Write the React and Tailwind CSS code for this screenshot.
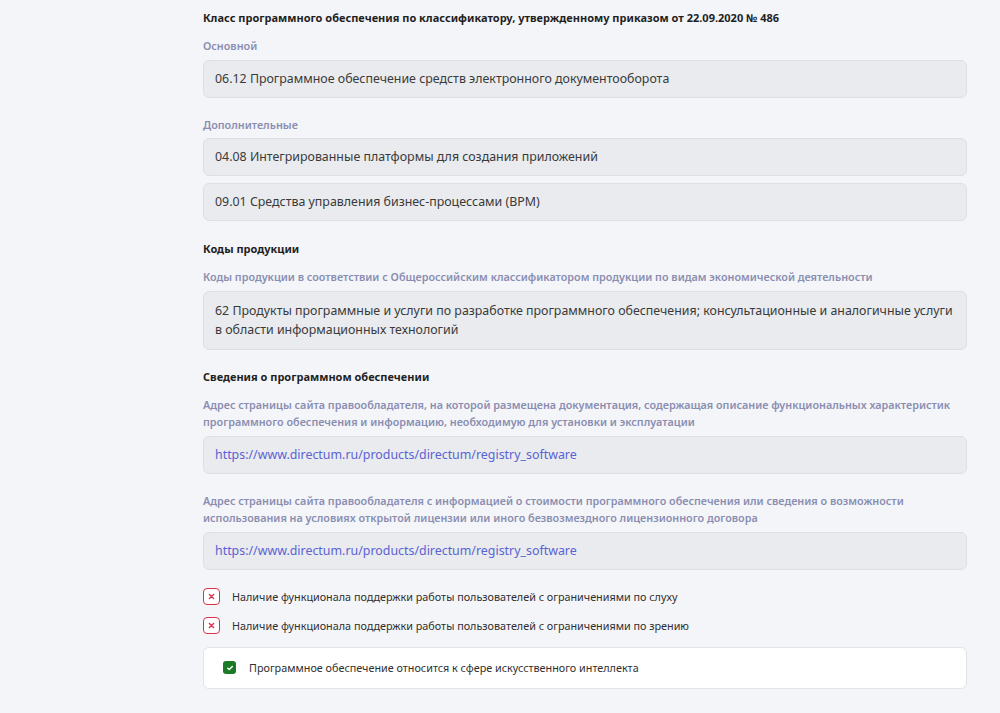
import React from "react";

function Field({ children, link, multi }) {
  return (
    <div
      className={
        "rounded-md border border-[#dcdfe4] bg-[#e9ebef] px-[11px] py-[9px] text-[12.4px] " +
        (multi ? "leading-[19.5px] " : "leading-[18px] ") +
        (link ? "text-[#5b63d3]" : "text-[#3a3a3a]")
      }
    >
      {children}
    </div>
  );
}

function Label({ children }) {
  return <div className="text-[10.8px] leading-[17.5px] font-semibold text-[#8a8eb1]">{children}</div>;
}

function Heading({ children }) {
  return <div className="text-[11px] leading-[17px] font-bold text-[#1f1f1f]">{children}</div>;
}

function XBox() {
  return (
    <span className="flex h-[17px] w-[17px] items-center justify-center rounded-[4px] border-[1.5px] border-[#d9344a] bg-white">
      <svg viewBox="0 0 10 10" className="h-[7px] w-[7px]" fill="none" stroke="#d9344a" strokeWidth="2" strokeLinecap="round">
        <path d="M2 2l6 6M8 2l-6 6" />
      </svg>
    </span>
  );
}

export default function App() {
  return (
    <div className="min-h-[713px] bg-[#f4f5f9] pl-[203px] pr-[33px] pt-[9px] pb-6" style={{ fontFamily: '"Noto Sans", "Open Sans", sans-serif' }}>
      <Heading>Класс программного обеспечения по классификатору, утвержденному приказом от 22.09.2020 № 486</Heading>
      <div className="mt-[11px]">
        <Label>Основной</Label>
      </div>
      <div className="mt-[5px]">
        <Field>06.12 Программное обеспечение средств электронного документооборота</Field>
      </div>
      <div className="mt-[18px]">
        <Label>Дополнительные</Label>
      </div>
      <div className="mt-[5px] flex flex-col gap-[7px]">
        <Field>04.08 Интегрированные платформы для создания приложений</Field>
        <Field>09.01 Средства управления бизнес-процессами (BPM)</Field>
      </div>

      <div className="mt-[19px]">
        <Heading>Коды продукции</Heading>
      </div>
      <div className="mt-[11px]">
        <Label>Коды продукции в соответствии с Общероссийским классификатором продукции по видам экономической деятельности</Label>
      </div>
      <div className="mt-[5px]">
        <Field multi>
          62 Продукты программные и услуги по разработке программного обеспечения; консультационные и аналогичные услуги в области информационных технологий
        </Field>
      </div>

      <div className="mt-[18px]">
        <Heading>Сведения о программном обеспечении</Heading>
      </div>
      <div className="mt-[11px]">
        <Label>
          Адрес страницы сайта правообладателя, на которой размещена документация, содержащая описание функциональных характеристик программного обеспечения и информацию, необходимую для установки и эксплуатации
        </Label>
      </div>
      <div className="mt-[5px]">
        <Field link>https://www.directum.ru/products/directum/registry_software</Field>
      </div>
      <div className="mt-[18px]">
        <Label>
          Адрес страницы сайта правообладателя с информацией о стоимости программного обеспечения или сведения о возможности использования на условиях открытой лицензии или иного безвозмездного лицензионного договора
        </Label>
      </div>
      <div className="mt-[5px]">
        <Field link>https://www.directum.ru/products/directum/registry_software</Field>
      </div>

      <div className="mt-[18px] flex flex-col gap-[12px] text-[10.8px] leading-[17px] text-[#2f2f2f]">
        <div className="flex items-center gap-[12px]">
          <XBox />
          <span>Наличие функционала поддержки работы пользователей с ограничениями по слуху</span>
        </div>
        <div className="flex items-center gap-[12px]">
          <XBox />
          <span>Наличие функционала поддержки работы пользователей с ограничениями по зрению</span>
        </div>
      </div>

      <div className="mt-[13px] flex items-center gap-[13px] rounded-md border border-[#e2e4e8] bg-white px-[19px] py-[11.5px] text-[10.8px] leading-[17px] text-[#2f2f2f]">
        <span className="flex h-[13px] w-[13px] items-center justify-center rounded-[3px] bg-[#1b7a25]">
          <svg viewBox="0 0 10 10" className="h-[8px] w-[8px]" fill="none" stroke="white" strokeWidth="1.8" strokeLinecap="round" strokeLinejoin="round">
            <path d="M2.2 5.2l1.9 1.8 3.8-4" />
          </svg>
        </span>
        <span>Программное обеспечение относится к сфере искусственного интеллекта</span>
      </div>
    </div>
  );
}
